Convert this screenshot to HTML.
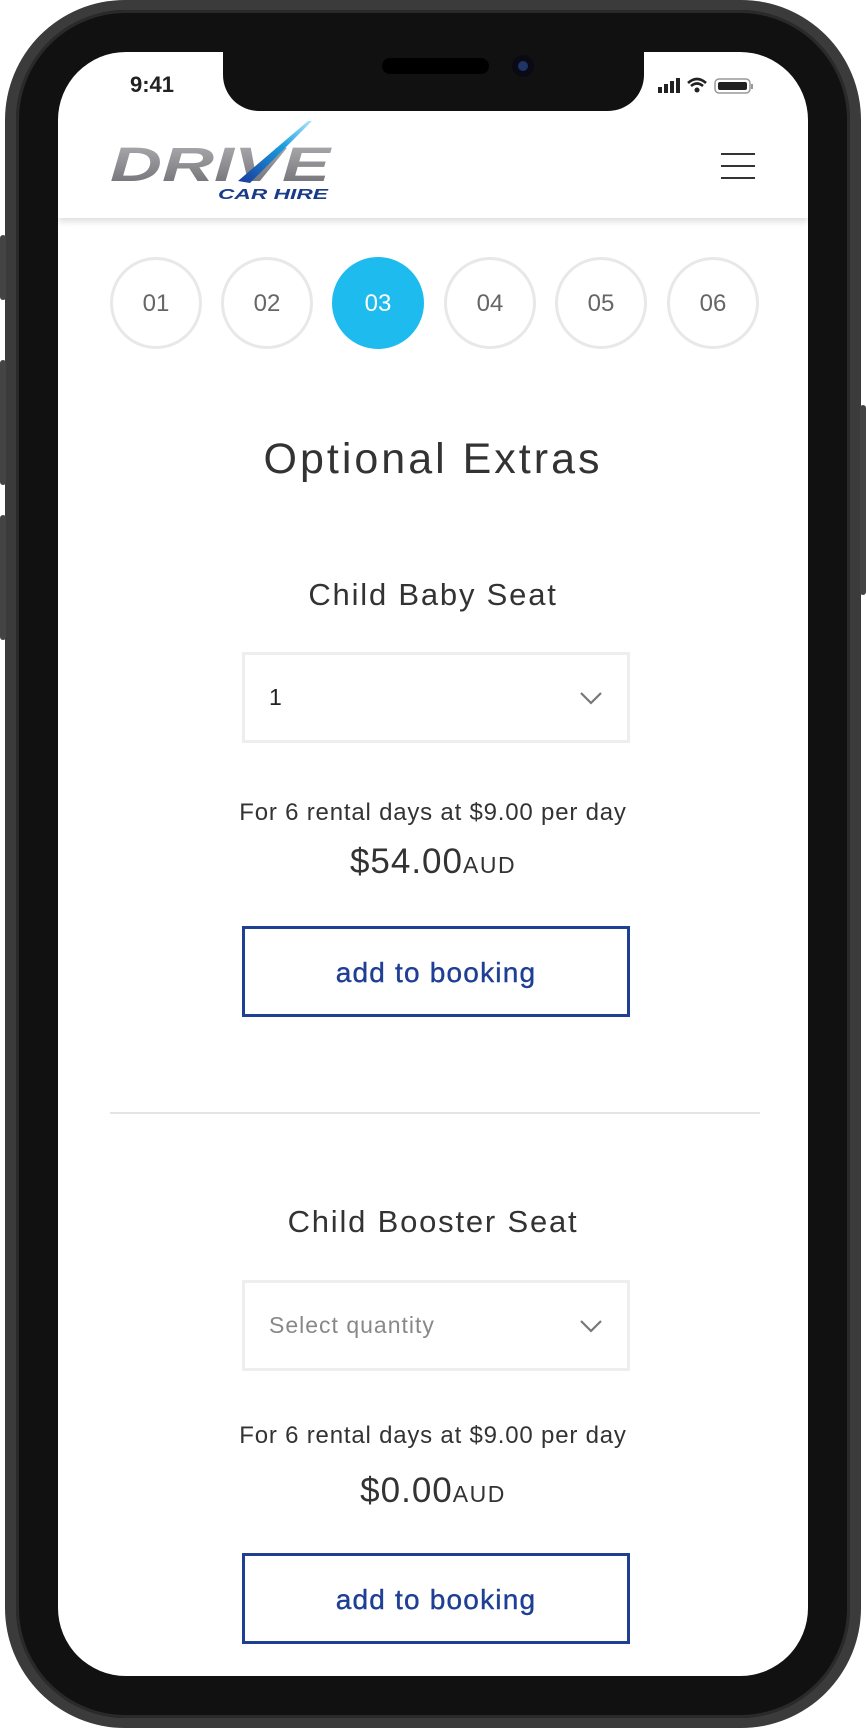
<!DOCTYPE html>
<html><head><meta charset="utf-8"><style>
html,body{margin:0;padding:0;background:#fff;}
body{width:866px;height:1728px;position:relative;overflow:hidden;font-family:"Liberation Sans",sans-serif;}
.phone{position:absolute;left:5px;top:0;width:856px;height:1728px;border-radius:120px;background:#3b3b3b;}
.phone2{position:absolute;left:16px;top:10px;width:834px;height:1708px;border-radius:110px;background:#111;box-shadow:inset 0 0 0 3px #2a2a2a;}
.btn-side{position:absolute;background:#444;border-radius:3px;width:6px;}
.screen{position:absolute;left:58px;top:52px;width:750px;height:1624px;border-radius:68px;background:#fff;overflow:hidden;}
.notch{position:absolute;left:165px;top:-2px;width:421px;height:61px;background:#111;border-radius:0 0 36px 36px;}
.speaker{position:absolute;left:159px;top:8px;width:107px;height:16px;background:#000;border-radius:8px;}
.cam{position:absolute;left:289px;top:5px;width:22px;height:22px;border-radius:50%;background:#0a0a14;}
.cam:after{content:"";position:absolute;left:6px;top:6px;width:10px;height:10px;border-radius:50%;background:#1e3566;}
.time{position:absolute;left:72px;top:20px;font-size:22px;font-weight:bold;color:#222;}
.header{position:absolute;left:0;top:0;width:750px;height:166px;box-shadow:0 4px 6px rgba(0,0,0,.12);}
.c{position:absolute;width:86px;height:86px;border:3px solid #e8e8e8;border-radius:50%;top:205px;text-align:center;line-height:88px;font-size:24px;color:#666;}
.c.on{background:#1dbbee;border-color:#1dbbee;color:#fff;}
.ct{position:absolute;left:0;width:750px;text-align:center;color:#333;}
.sel{position:absolute;left:184px;width:382px;height:85px;border:3px solid #eee;}
.sel span{position:absolute;left:24px;top:29px;font-size:23px;}
.sel svg{position:absolute;right:24px;top:36px;}
.bt{position:absolute;left:184px;width:382px;height:85px;border:3px solid #1e3f94;color:#1e3f94;text-align:center;line-height:88px;font-size:28px;letter-spacing:1.2px;-webkit-text-stroke:.4px #1e3f94;}
</style></head><body>
<div class="phone"></div>
<div class="phone2"></div>
<div class="btn-side" style="left:0;top:235px;height:65px"></div>
<div class="btn-side" style="left:0;top:360px;height:125px"></div>
<div class="btn-side" style="left:0;top:515px;height:125px"></div>
<div class="btn-side" style="left:860px;top:405px;height:190px"></div>
<div class="screen">
  <div class="header">
    <svg style="position:absolute;left:52px;top:69px" width="225" height="80" viewBox="0 0 225 80">
      <defs><linearGradient id="g" x1="0" y1="0" x2="0" y2="1"><stop offset="0" stop-color="#b0b0b4"/><stop offset="1" stop-color="#6a6a70"/></linearGradient>
      <linearGradient id="b" x1="0" y1="1" x2="1" y2="0"><stop offset="0" stop-color="#1a3a9a"/><stop offset=".6" stop-color="#1a9ee0"/><stop offset="1" stop-color="#aee6fb"/></linearGradient></defs>
      <text x="0" y="60" font-family="Liberation Sans" font-weight="bold" font-style="italic" font-size="48" fill="url(#g)" textLength="220" lengthAdjust="spacingAndGlyphs">DRIVE</text>
      <path d="M128 60 L198 0 L202 0 L140 62 Z" fill="url(#b)"/>
      <text x="108" y="78" font-family="Liberation Sans" font-weight="bold" font-style="italic" font-size="15" fill="#1a3a8a" textLength="110" lengthAdjust="spacingAndGlyphs">CAR HIRE</text>
    </svg>
    <div style="position:absolute;left:663px;top:101px;width:34px;height:2px;background:#333"></div>
    <div style="position:absolute;left:663px;top:113px;width:34px;height:2px;background:#333"></div>
    <div style="position:absolute;left:663px;top:125px;width:34px;height:2px;background:#333"></div>
  </div>
  <div class="notch"><div class="speaker"></div><div class="cam"></div></div>
  <div class="time">9:41</div>
  <svg style="position:absolute;left:600px;top:24px" width="110" height="20" viewBox="0 0 110 20">
    <rect x="0" y="11" width="4" height="6" fill="#222"/><rect x="6" y="8" width="4" height="9" fill="#222"/><rect x="12" y="5" width="4" height="12" fill="#222"/><rect x="18" y="2" width="4" height="15" fill="#222"/>
    <path d="M30 7 Q39 -1 48 7 M33 10 Q39 5 45 10" stroke="#222" stroke-width="2.6" fill="none"/><circle cx="39" cy="14" r="2.5" fill="#222"/>
    <rect x="57" y="3" width="35" height="14" rx="4" stroke="#999" stroke-width="1.5" fill="none"/><rect x="60" y="6" width="29" height="8" rx="2" fill="#222"/><rect x="93" y="8" width="2" height="5" fill="#999"/>
  </svg>
  <div class="c" style="left:52px">01</div>
  <div class="c" style="left:163px">02</div>
  <div class="c on" style="left:274px">03</div>
  <div class="c" style="left:386px">04</div>
  <div class="c" style="left:497px">05</div>
  <div class="c" style="left:609px">06</div>
  <div class="ct" style="top:383px;font-size:43px;letter-spacing:3px">Optional Extras</div>
  <div class="ct" style="top:525px;font-size:31px;letter-spacing:1.8px">Child Baby Seat</div>
  <div class="sel" style="top:600px"><span style="color:#222">1</span><svg width="24" height="14" viewBox="0 0 24 14"><path d="M2 2 L12 12 L22 2" stroke="#777" stroke-width="2.2" fill="none"/></svg></div>
  <div class="ct" style="top:747px;font-size:24px;letter-spacing:.8px">For 6 rental days at $9.00 per day</div>
  <div class="ct" style="top:790px;font-size:35px;letter-spacing:1px">$54.00<span style="font-size:23px;letter-spacing:1.5px">AUD</span></div>
  <div class="bt" style="top:874px">add to booking</div>
  <div style="position:absolute;left:52px;top:1060px;width:650px;height:2px;background:#e4e4e4"></div>
  <div class="ct" style="top:1152px;font-size:31px;letter-spacing:1.8px">Child Booster Seat</div>
  <div class="sel" style="top:1228px"><span style="color:#888;letter-spacing:1px">Select quantity</span><svg width="24" height="14" viewBox="0 0 24 14"><path d="M2 2 L12 12 L22 2" stroke="#777" stroke-width="2.2" fill="none"/></svg></div>
  <div class="ct" style="top:1370px;font-size:24px;letter-spacing:.8px">For 6 rental days at $9.00 per day</div>
  <div class="ct" style="top:1419px;font-size:35px;letter-spacing:1px">$0.00<span style="font-size:23px;letter-spacing:1.5px">AUD</span></div>
  <div class="bt" style="top:1501px">add to booking</div>
</div>
</body></html>
